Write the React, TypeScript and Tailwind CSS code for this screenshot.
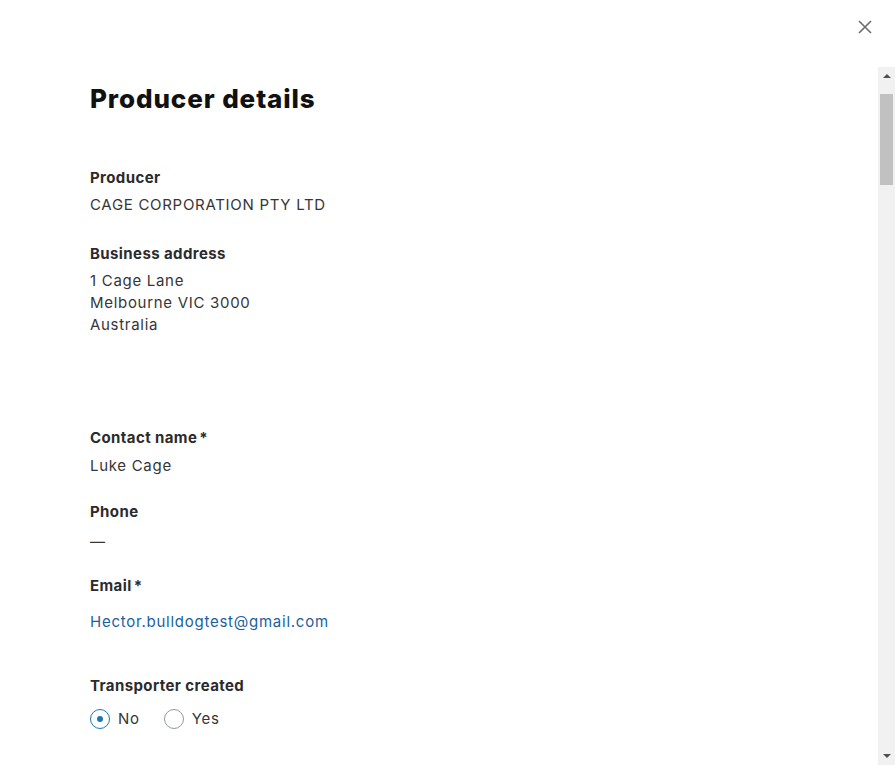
import React from 'react';

const font = { fontFamily: 'Inter, "Noto Sans", sans-serif' };

const valueCls = 'text-[15px] leading-[22px] tracking-[0.7px] text-[#363636]';

const Field: React.FC<{ label: string; required?: boolean; className?: string; children: React.ReactNode }> = ({
  label,
  required,
  className,
  children,
}) => (
  <div className={className}>
    <div className="text-[15px] font-bold leading-[22px] tracking-[0.4px] text-[#2b2b2b]">
      {label}
      {required && <span className="ml-[2px]">*</span>}
    </div>
    {children}
  </div>
);

const Radio: React.FC<{ label: string; checked?: boolean }> = ({ label, checked }) => (
  <label className="flex items-center gap-[8px]">
    <span
      className={`flex h-[20px] w-[20px] items-center justify-center rounded-full border-[1.5px] ${
        checked ? 'border-[#1b78b6]' : 'border-[#8c99a8]'
      }`}
    >
      {checked && <span className="h-[6px] w-[6px] rounded-full bg-[#1b78b6]" />}
    </span>
    <span className="text-[15px] tracking-[0.7px] text-[#363636]">{label}</span>
  </label>
);

export default function App() {
  return (
    <div className="relative h-[765px] w-[895px] overflow-hidden bg-white" style={font}>
      {/* header */}
      <div className="flex h-[67px] justify-end pr-[19px] pt-[16px]">
        <button className="flex h-[22px] w-[22px] items-center justify-center text-[#6b6b6b]" aria-label="Close">
          <svg width="16" height="16" viewBox="0 0 16 16" fill="none" stroke="currentColor" strokeWidth="1.6">
            <path d="M2 2 L14 14 M14 2 L2 14" />
          </svg>
        </button>
      </div>

      <div className="flex h-[698px]">
        {/* body */}
        <div className="flex-1 pl-[90px] pt-[16px]">
          <h1 className="text-[26px] font-extrabold leading-[32px] tracking-[0.9px] text-[#111]">Producer details</h1>

          <Field label="Producer" className="mt-[52px]">
            <div className={`mt-[5px] ${valueCls}`}>CAGE CORPORATION PTY LTD</div>
          </Field>

          <Field label="Business address" className="mt-[27px]">
            <div className={`mt-[5px] ${valueCls}`}>
              <div>1 Cage Lane</div>
              <div>Melbourne VIC 3000</div>
              <div>Australia</div>
            </div>
          </Field>

          <Field label="Contact name" required className="mt-[91px]">
            <div className={`mt-[6px] ${valueCls}`}>Luke Cage</div>
          </Field>

          <Field label="Phone" className="mt-[24px]">
            <div className={`mt-[8px] ${valueCls}`}>—</div>
          </Field>

          <Field label="Email" required className="mt-[22px]">
            <div className="mt-[14px] text-[15px] leading-[22px] tracking-[0.75px] text-[#1a5fa0]">
              Hector.bulldogtest@gmail.com
            </div>
          </Field>

          <Field label="Transporter created" className="mt-[42px]">
            <div className="mt-[11px] flex gap-[24px]">
              <Radio label="No" checked />
              <Radio label="Yes" />
            </div>
          </Field>
        </div>

        {/* scrollbar */}
        <div className="flex w-[17px] flex-col items-center bg-[#f1f1f1]">
          <div className="flex h-[17px] w-full items-center justify-center">
            <svg width="8" height="5" viewBox="0 0 8 5">
              <path d="M0 5 L4 1 L8 5 Z" fill="#505050" />
            </svg>
          </div>
          <div className="mt-[10px] h-[91px] w-[13px] bg-[#c1c1c1]" />
          <div className="flex-1" />
          <div className="flex h-[17px] w-full items-center justify-center">
            <svg width="8" height="5" viewBox="0 0 8 5">
              <path d="M0 0 L8 0 L4 4 Z" fill="#505050" />
            </svg>
          </div>
        </div>
      </div>
    </div>
  );
}
